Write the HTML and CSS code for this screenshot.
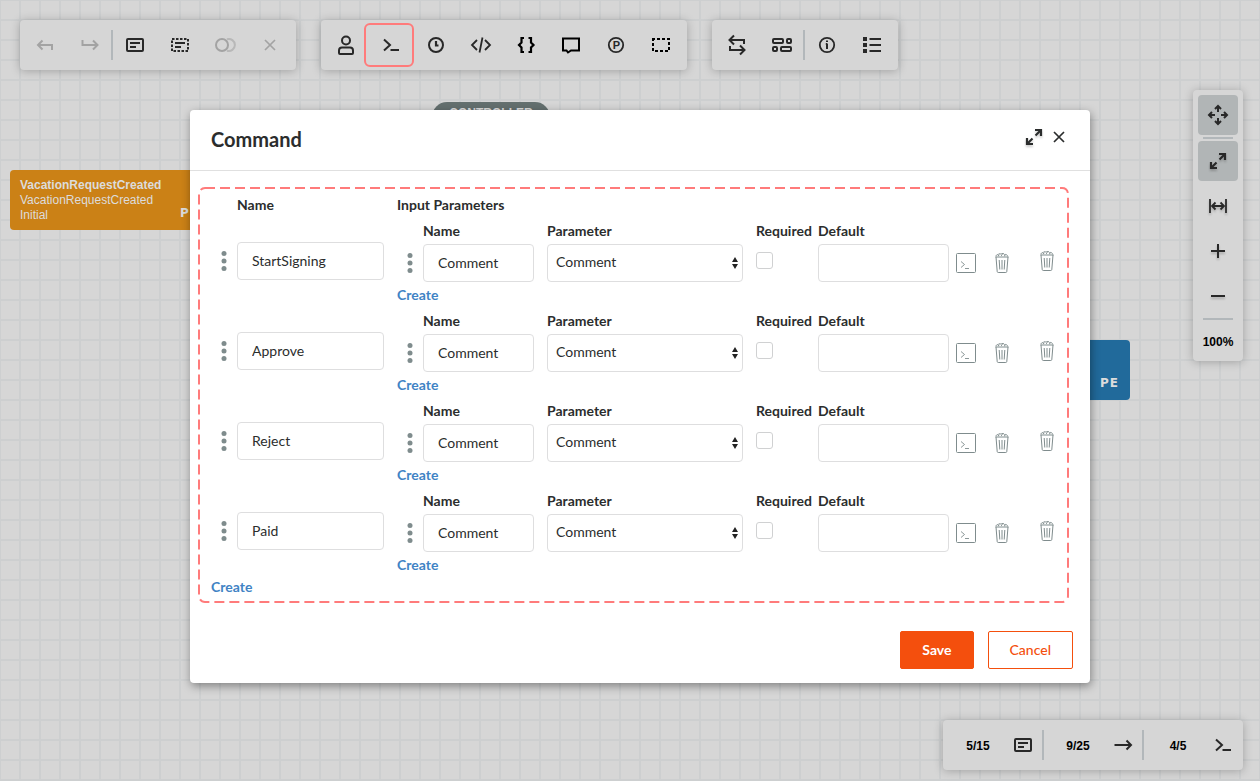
FILE: index.html
```html
<!DOCTYPE html>
<html lang="en">
<head>
    <meta charset="UTF-8">
    <meta name="viewport" content="width=device-width, initial-scale=1.0">
    <title>Command</title>
    <link rel="stylesheet" href="styles.css">
</head>
<body>
    <!-- Icon sprite -->
    <svg class="sprite" xmlns="http://www.w3.org/2000/svg" aria-hidden="true">
        <symbol id="undo" viewBox="0 0 24 24"><path d="M9.500 7.500L5 12l4.500 4.500M5 12h14v5"/></symbol>
        <symbol id="redo" viewBox="0 0 24 24"><path d="M15 7.500l4.500 4.500-4.500 4.500M19.500 12H4.500V7"/></symbol>
        <symbol id="card" viewBox="0 0 24 24"><rect x="4" y="6" width="16" height="12" rx="1"/><path d="M7 10h10M7 14h6"/></symbol>
        <symbol id="card-dashed" viewBox="0 0 24 24"><rect x="4" y="6" width="16" height="12" stroke-dasharray="2.500 1.500"/><path d="M7 10h10M7 14h6"/></symbol>
        <symbol id="toggle" viewBox="0 0 24 24"><circle cx="9" cy="12" r="6"/><path d="M14 6.300a6 6 0 1 1 0 11.400" opacity=".6"/></symbol>
        <symbol id="close" viewBox="0 0 24 24"><path d="M7 7l10 10M17 7L7 17" stroke-width="1.700"/></symbol>
        <symbol id="user" viewBox="0 0 24 24"><circle cx="12" cy="7.500" r="4"/><path d="M5 20v-2.500c0-2 1.200-3 3-3h8c1.800 0 3 1 3 3V20a1 1 0 0 1-1 1H6a1 1 0 0 1-1-1z"/></symbol>
        <symbol id="prompt" viewBox="0 0 24 24"><path d="M5 6.500l6 5.500-6 5.500M11.500 17h8.500"/></symbol>
        <symbol id="clock" viewBox="0 0 24 24"><circle cx="12" cy="12" r="7"/><path d="M12 8v4.500h2.500" stroke-width="2.200"/></symbol>
        <symbol id="code" viewBox="0 0 24 24"><path d="M8 7l-5 5 5 5M16 7l5 5-5 5M13.500 4.500l-3 15" stroke-width="1.800"/></symbol>
        <symbol id="braces" viewBox="0 0 24 24"><path d="M10 5H7.500v4.500L5 12l2.500 2.500V19H10M14.500 5H17v4.500l2.500 2.500-2.500 2.500V19h-2.500" stroke-width="2.200"/></symbol>
        <symbol id="speech" viewBox="0 0 24 24"><path d="M4 5.500h16v12h-8l-3 2-1.500-2H4z"/></symbol>
        <symbol id="parking" viewBox="0 0 24 24"><circle cx="12" cy="12" r="7.200" stroke-width="1.800"/><text x="12.500" y="15.800">P</text></symbol>
        <symbol id="region" viewBox="0 0 24 24"><rect x="4" y="6" width="16" height="12" stroke-dasharray="3 2" stroke-dashoffset="1"/></symbol>
        <symbol id="swap" viewBox="0 0 24 24"><path d="M19 11V7H5M9 2.500L4.500 7 9 11.500M5 13v4h14M15 12.500l4.500 4.500-4.500 4.500"/></symbol>
        <symbol id="layout" viewBox="0 0 24 24"><rect x="3" y="6" width="10" height="4" rx="1"/><rect x="17" y="6" width="4" height="4" rx="1"/><rect x="3" y="14" width="4" height="4" rx="1"/><rect x="11" y="14" width="10" height="4" rx="1"/></symbol>
        <symbol id="info" viewBox="0 0 24 24"><circle cx="12" cy="12" r="7.200" stroke-width="1.800"/><path d="M12 10.500V16M10.800 11H12M12 7.500V9"/></symbol>
        <symbol id="list" viewBox="0 0 24 24"><path d="M3 6h4M3 12h4M3 18h4" stroke-width="4"/><path d="M9.500 6H21M9.500 12H21M9.500 18H21"/></symbol>
        <symbol id="move" viewBox="0 0 24 24"><path d="M12 3.500v5.500M12 15v5.500M3.500 12H9M15 12h5.500M9 6l3-3 3 3M9 18l3 3 3-3M6 9l-3 3 3 3M18 9l3 3-3 3"/></symbol>
        <symbol id="expand" viewBox="0 0 24 24"><path d="M13.500 10.500L18 6M10.500 13.500L6 18" stroke-width="2.200"/><path d="M13 5h6v6M5 13v6h6" stroke-width="2.200"/></symbol>
        <symbol id="fit" viewBox="0 0 24 24"><path d="M4 5v14M20 5v14M6 12h12M9.500 8.500L6 12l3.500 3.500M14.500 8.500L18 12l-3.500 3.500" stroke-width="1.800"/></symbol>
        <symbol id="plus" viewBox="0 0 24 24"><path d="M12 5v14M5 12h14"/></symbol>
        <symbol id="minus" viewBox="0 0 24 24"><path d="M5 12h14"/></symbol>
        <symbol id="arrow" viewBox="0 0 24 24"><path d="M3.500 12H20M15.500 7.500L20 12l-4.500 4.500"/></symbol>
        <symbol id="dots" viewBox="0 0 6 20"><circle cx="3" cy="2.500" r="2.500"/><circle cx="3" cy="10" r="2.500"/><circle cx="3" cy="17.500" r="2.500"/></symbol>
        <symbol id="expression" viewBox="0 0 20 20"><rect x=".5" y=".5" width="19" height="19" rx="1"/><path d="M5 8.500l3.500 3L5 14.500M9 15.500h4" stroke-width=".9"/></symbol>
        <symbol id="trash" viewBox="0 0 14 20"><path d="M.5 4h13M1 4l1.200 14.500c.1.600.4 1 1 1h7.600c.6 0 .9-.4 1-1L13 4"/><path d="M1 3.500c0-1.500 1-2 2-1.800C3.500.5 5 .4 6 1.200 7.200.2 9 .4 9.600 1.500c1.400-.3 2.800.3 3.200 2M3 3l1.500-1.200M6 2.800l1.500-1.300M9 3l1.500-.8"/><path d="M4.200 7l.6 9.500M7 7v9.500M9.800 7l-.6 9.500"/></symbol>
        <symbol id="updown" viewBox="0 0 6 12"><path d="M3 0l3 5H0zM3 12L0 7h6z"/></symbol>
    </svg>

    <!-- Workflow canvas -->
    <main class="canvas">
        <div class="node node-control">CONTROLLER</div>
        <div class="node node-activity">
            <strong>VacationRequestCreated</strong>
            <span>VacationRequestCreated</span>
            <span>Initial</span>
            <b class="node-flags">PE</b>
        </div>
        <div class="node node-final"><b class="node-flags">PE</b></div>
    </main>

    <header class="toolbars">
        <div class="toolbar">
            <button type="button" aria-label="Undo" disabled><svg class="icon"><use href="#undo"/></svg></button>
            <button type="button" aria-label="Redo" disabled><svg class="icon"><use href="#redo"/></svg></button>
            <span class="separator"></span>
            <button type="button" aria-label="Create activity"><svg class="icon"><use href="#card"/></svg></button>
            <button type="button" aria-label="Select all"><svg class="icon"><use href="#card-dashed"/></svg></button>
            <button type="button" aria-label="Copy" disabled><svg class="icon"><use href="#toggle"/></svg></button>
            <button type="button" aria-label="Delete" disabled><svg class="icon"><use href="#close"/></svg></button>
        </div>
        <div class="toolbar">
            <button type="button" aria-label="Actors"><svg class="icon"><use href="#user"/></svg></button>
            <button type="button" aria-label="Commands" class="highlighted"><svg class="icon"><use href="#prompt"/></svg></button>
            <button type="button" aria-label="Timers"><svg class="icon"><use href="#clock"/></svg></button>
            <button type="button" aria-label="Code actions"><svg class="icon"><use href="#code"/></svg></button>
            <button type="button" aria-label="Parameters" class="dark"><svg class="icon"><use href="#braces"/></svg></button>
            <button type="button" aria-label="Localization" class="dark"><svg class="icon"><use href="#speech"/></svg></button>
            <button type="button" aria-label="Process"><svg class="icon"><use href="#parking"/></svg></button>
            <button type="button" aria-label="Area" class="dark"><svg class="icon"><use href="#region"/></svg></button>
        </div>
        <div class="toolbar">
            <button type="button" aria-label="Swap"><svg class="icon"><use href="#swap"/></svg></button>
            <button type="button" aria-label="Arrange"><svg class="icon"><use href="#layout"/></svg></button>
            <span class="separator"></span>
            <button type="button" aria-label="Info"><svg class="icon"><use href="#info"/></svg></button>
            <button type="button" aria-label="Legend"><svg class="icon"><use href="#list"/></svg></button>
        </div>
    </header>

    <aside class="zoombar">
        <button type="button" aria-label="Move" class="pressed"><svg class="icon"><use href="#move"/></svg></button>
        <span class="separator"></span>
        <div class="zoombar-group">
            <button type="button" aria-label="Full screen" class="pressed"><svg class="icon shaded"><use href="#expand"/></svg></button>
            <button type="button" aria-label="Fit width"><svg class="icon shaded"><use href="#fit"/></svg></button>
            <button type="button" aria-label="Zoom in"><svg class="icon shaded"><use href="#plus"/></svg></button>
            <button type="button" aria-label="Zoom out"><svg class="icon shaded"><use href="#minus"/></svg></button>
        </div>
        <span class="separator"></span>
        <span class="zoom-value">100%</span>
    </aside>

    <footer class="stats">
        <div class="stat"><span>5/15</span><svg class="icon"><use href="#card"/></svg></div>
        <span class="separator"></span>
        <div class="stat"><span>9/25</span><svg class="icon"><use href="#arrow"/></svg></div>
        <span class="separator"></span>
        <div class="stat"><span>4/5</span><svg class="icon"><use href="#prompt"/></svg></div>
    </footer>

    <div class="modal-overlay">
        <form class="modal" role="dialog" aria-labelledby="modal-title">
            <div class="modal-header">
                <h1 class="modal-title" id="modal-title">Command</h1>
                <div class="modal-tools">
                    <button type="button" aria-label="Expand"><svg class="icon shaded"><use href="#expand"/></svg></button>
                    <button type="button" aria-label="Close"><svg class="icon"><use href="#close"/></svg></button>
                </div>
            </div>

            <div class="modal-body">
                <div class="commands">
                    <svg class="commands-outline" aria-hidden="true"><rect width="100%" height="100%" rx="6"/></svg>
                    <div class="commands-head">
                        <span class="head-name">Name</span>
                        <span class="head-params">Input Parameters</span>
                    </div>

                    <div class="command">
                        <svg class="handle"><use href="#dots"/></svg>
                        <input class="field command-name" type="text" aria-label="Command name" value="StartSigning">
                        <div class="params">
                            <div class="param">
                                <svg class="handle"><use href="#dots"/></svg>
                                <div class="cell cell-name">
                                    <label for="name-1">Name</label>
                                    <input class="field" id="name-1" type="text" value="Comment">
                                </div>
                                <div class="cell cell-parameter">
                                    <label for="parameter-1">Parameter</label>
                                    <div class="select-wrap">
                                        <select class="field" id="parameter-1"><option>Comment</option></select>
                                        <svg class="updown"><use href="#updown"/></svg>
                                    </div>
                                </div>
                                <div class="cell cell-required">
                                    <label for="required-1">Required</label>
                                    <input class="check" id="required-1" type="checkbox">
                                </div>
                                <div class="cell cell-default">
                                    <label for="default-1">Default</label>
                                    <input class="field" id="default-1" type="text">
                                </div>
                                <button class="row-button" type="button" aria-label="Edit expression"><svg class="expression"><use href="#expression"/></svg></button>
                                <button class="row-button" type="button" aria-label="Delete parameter"><svg class="trash"><use href="#trash"/></svg></button>
                            </div>
                            <a class="create" href="#">Create</a>
                        </div>
                        <button class="row-button command-delete" type="button" aria-label="Delete command"><svg class="trash"><use href="#trash"/></svg></button>
                    </div>

                    <div class="command">
                        <svg class="handle"><use href="#dots"/></svg>
                        <input class="field command-name" type="text" aria-label="Command name" value="Approve">
                        <div class="params">
                            <div class="param">
                                <svg class="handle"><use href="#dots"/></svg>
                                <div class="cell cell-name">
                                    <label for="name-2">Name</label>
                                    <input class="field" id="name-2" type="text" value="Comment">
                                </div>
                                <div class="cell cell-parameter">
                                    <label for="parameter-2">Parameter</label>
                                    <div class="select-wrap">
                                        <select class="field" id="parameter-2"><option>Comment</option></select>
                                        <svg class="updown"><use href="#updown"/></svg>
                                    </div>
                                </div>
                                <div class="cell cell-required">
                                    <label for="required-2">Required</label>
                                    <input class="check" id="required-2" type="checkbox">
                                </div>
                                <div class="cell cell-default">
                                    <label for="default-2">Default</label>
                                    <input class="field" id="default-2" type="text">
                                </div>
                                <button class="row-button" type="button" aria-label="Edit expression"><svg class="expression"><use href="#expression"/></svg></button>
                                <button class="row-button" type="button" aria-label="Delete parameter"><svg class="trash"><use href="#trash"/></svg></button>
                            </div>
                            <a class="create" href="#">Create</a>
                        </div>
                        <button class="row-button command-delete" type="button" aria-label="Delete command"><svg class="trash"><use href="#trash"/></svg></button>
                    </div>

                    <div class="command">
                        <svg class="handle"><use href="#dots"/></svg>
                        <input class="field command-name" type="text" aria-label="Command name" value="Reject">
                        <div class="params">
                            <div class="param">
                                <svg class="handle"><use href="#dots"/></svg>
                                <div class="cell cell-name">
                                    <label for="name-3">Name</label>
                                    <input class="field" id="name-3" type="text" value="Comment">
                                </div>
                                <div class="cell cell-parameter">
                                    <label for="parameter-3">Parameter</label>
                                    <div class="select-wrap">
                                        <select class="field" id="parameter-3"><option>Comment</option></select>
                                        <svg class="updown"><use href="#updown"/></svg>
                                    </div>
                                </div>
                                <div class="cell cell-required">
                                    <label for="required-3">Required</label>
                                    <input class="check" id="required-3" type="checkbox">
                                </div>
                                <div class="cell cell-default">
                                    <label for="default-3">Default</label>
                                    <input class="field" id="default-3" type="text">
                                </div>
                                <button class="row-button" type="button" aria-label="Edit expression"><svg class="expression"><use href="#expression"/></svg></button>
                                <button class="row-button" type="button" aria-label="Delete parameter"><svg class="trash"><use href="#trash"/></svg></button>
                            </div>
                            <a class="create" href="#">Create</a>
                        </div>
                        <button class="row-button command-delete" type="button" aria-label="Delete command"><svg class="trash"><use href="#trash"/></svg></button>
                    </div>

                    <div class="command">
                        <svg class="handle"><use href="#dots"/></svg>
                        <input class="field command-name" type="text" aria-label="Command name" value="Paid">
                        <div class="params">
                            <div class="param">
                                <svg class="handle"><use href="#dots"/></svg>
                                <div class="cell cell-name">
                                    <label for="name-4">Name</label>
                                    <input class="field" id="name-4" type="text" value="Comment">
                                </div>
                                <div class="cell cell-parameter">
                                    <label for="parameter-4">Parameter</label>
                                    <div class="select-wrap">
                                        <select class="field" id="parameter-4"><option>Comment</option></select>
                                        <svg class="updown"><use href="#updown"/></svg>
                                    </div>
                                </div>
                                <div class="cell cell-required">
                                    <label for="required-4">Required</label>
                                    <input class="check" id="required-4" type="checkbox">
                                </div>
                                <div class="cell cell-default">
                                    <label for="default-4">Default</label>
                                    <input class="field" id="default-4" type="text">
                                </div>
                                <button class="row-button" type="button" aria-label="Edit expression"><svg class="expression"><use href="#expression"/></svg></button>
                                <button class="row-button" type="button" aria-label="Delete parameter"><svg class="trash"><use href="#trash"/></svg></button>
                            </div>
                            <a class="create" href="#">Create</a>
                        </div>
                        <button class="row-button command-delete" type="button" aria-label="Delete command"><svg class="trash"><use href="#trash"/></svg></button>
                    </div>

                    <a class="create" href="#">Create</a>
                </div>
            </div>

            <div class="modal-footer">
                <button type="submit" class="button button-primary">Save</button>
                <button type="button" class="button">Cancel</button>
            </div>
        </form>
    </div>
</body>
</html>
```

FILE: styles.css
```css
:root {
    --canvas-color: #d6d6d6;
    --grid-color: #cdcfd0;
    --panel-color: #d6d6d6;
    --separator-color: #b2b7ba;
    --pressed-color: #b1b5b6;
    --icon-color: #282828;
    --text-primary: #2b2d2d;
    --accent: #f44f0d;
    --link: #4183c4;
    --muted: #7f8c8d;
    --border: #dededf;
    --highlight: #ff7b7b;

    --font-main: Lato, "Liberation Sans", sans-serif;
    --font-canvas: "Liberation Sans", Arial, sans-serif;
    --shadow-panel: 0 1px 10px rgba(0, 0, 0, 0.25);
}

*, *::before, *::after {
    box-sizing: border-box;
    margin: 0;
    padding: 0;
}

body {
    min-height: 100vh;
    overflow: hidden;
    font-family: var(--font-main);
    font-size: 14px;
    color: var(--text-primary);
    background-color: var(--canvas-color);
    background-image:
        linear-gradient(var(--grid-color) 2px, transparent 2px),
        linear-gradient(90deg, var(--grid-color) 2px, transparent 2px);
    background-size: 20px 20px;
    background-position: -1px -1px;
}

button {
    border: none;
    background: none;
    font: inherit;
    color: inherit;
    cursor: pointer;
}

.sprite {
    display: none;
}

.icon {
    display: block;
    width: 24px;
    height: 24px;
    fill: none;
    stroke: currentColor;
    stroke-width: 2;
}

#parking text {
    fill: currentColor;
    stroke: none;
    text-anchor: middle;
    font: bold 11px var(--font-canvas);
}

.shaded {
    filter: drop-shadow(0 2px 1px rgba(0, 0, 0, 0.2));
}

/* Canvas nodes */
.node {
    position: absolute;
    width: 200px;
    height: 60px;
    padding: 8px 10px;
    border-radius: 4px;
    font: 12px/15px var(--font-canvas);
    color: #dcdcdc;
}

.node strong,
.node span {
    display: block;
}

.node-control {
    left: 432px;
    top: 102px;
    width: 118px;
    height: 30px;
    padding: 4px 0;
    border-radius: 15px;
    font-weight: 700;
    text-align: center;
    background: #64706f;
}

.node-activity {
    left: 10px;
    top: 170px;
    background: #cb8116;
}

.node-final {
    left: 930px;
    top: 340px;
    background: #216a9b;
}

.node-flags {
    position: absolute;
    right: 11px;
    bottom: 9px;
    font: bold 12px/15px "DejaVu Sans", sans-serif;
    letter-spacing: 1px;
}

/* Toolbars */
.toolbars {
    position: absolute;
    top: 20px;
    left: 20px;
    display: flex;
    gap: 25px;
}

.toolbar,
.stats,
.zoombar {
    display: flex;
    align-items: center;
    border-radius: 4px;
    color: var(--icon-color);
    background: var(--panel-color);
    box-shadow: var(--shadow-panel);
}

.toolbar {
    height: 50px;
    padding: 0 4px 0 2px;
}

.toolbar button {
    position: relative;
    display: flex;
    align-items: center;
    justify-content: center;
    width: 45px;
    height: 50px;
}

.toolbar button:disabled {
    color: #a3a3a3;
}

.toolbar .dark {
    color: #000;
}

.highlighted::after {
    content: "";
    position: absolute;
    inset: 3px -1px 3px -4px;
    border: 2px solid var(--highlight);
    border-radius: 6px;
}

.separator {
    width: 2px;
    height: 30px;
    margin: 0 -1px;
    background: var(--separator-color);
}

.zoombar {
    position: absolute;
    top: 90px;
    right: 17px;
    flex-direction: column;
    gap: 2px;
    padding: 5px;
}

.zoombar .separator {
    width: 30px;
    height: 2px;
    margin: 0;
}

.zoombar-group {
    display: flex;
    flex-direction: column;
    gap: 5px;
}

.zoombar button {
    display: flex;
    align-items: center;
    justify-content: center;
    width: 40px;
    height: 40px;
    border-radius: 4px;
}

.zoombar .pressed {
    background: var(--pressed-color);
}

.zoom-value {
    padding-top: 6px;
    font: bold 12px/28px var(--font-canvas);
    color: #000;
}

.stats {
    position: absolute;
    right: 17px;
    bottom: 11px;
    height: 50px;
}

.stat {
    display: flex;
    align-items: center;
    width: 100px;
    padding: 0 8px 0 12px;
}

.stat span {
    flex: 1;
    padding: 1px 10px 0 0;
    font: bold 12px/16px var(--font-canvas);
    text-align: center;
    color: #000;
}

/* Modal */
.modal-overlay {
    position: absolute;
    inset: 0;
    display: flex;
    justify-content: center;
    align-items: flex-start;
    padding: 110px 0 0 20px;
    pointer-events: none;
}

.modal {
    width: 100%;
    max-width: 900px;
    border-radius: 4px;
    background: #fff;
    box-shadow: 1px 3px 10px rgba(0, 0, 0, 0.4);
    pointer-events: auto;
}

.modal-header {
    display: flex;
    align-items: center;
    justify-content: space-between;
    padding: 14px 19px 16px 21px;
    border-bottom: 1px solid #e0e0e0;
}

.modal-title {
    font-size: 20px;
    font-weight: 700;
    line-height: 30px;
}

.modal-tools {
    display: flex;
    gap: 1px;
    padding-bottom: 4px;
}

.modal-body {
    padding: 16px 21px 0 8px;
}

.commands {
    position: relative;
    padding: 7px 13px 6px;
}

.commands-outline {
    position: absolute;
    top: 1px;
    left: 1px;
    width: calc(100% - 2px);
    height: calc(100% - 2px);
    overflow: visible;
    fill: none;
    stroke: var(--highlight);
    stroke-width: 2;
    stroke-dasharray: 10 5;
    pointer-events: none;
}

.commands-head {
    display: flex;
    padding: 0 0 1px 26px;
    font-weight: 700;
    line-height: 21px;
}

.head-name {
    width: 160px;
}

.command {
    display: flex;
    height: 90px;
}

.handle {
    flex: none;
    width: 6px;
    height: 20px;
    margin: 35px 10px 0;
    fill: var(--muted);
}

.field {
    display: block;
    width: 100%;
    height: 38px;
    padding: 0 14px 2px;
    border: 1px solid var(--border);
    border-radius: 4px;
    background: #fff;
    font: 14px/20px var(--font-main);
    color: var(--text-primary);
}

.command-name {
    flex: none;
    width: 147px;
    margin: 26px 13px 0 0;
}

.params {
    flex: 1;
    padding-top: 5px;
}

.param {
    display: flex;
}

.param .handle {
    margin-top: 32px;
}

.cell {
    flex: none;
}

.cell label {
    display: block;
    margin-bottom: 3px;
    font-weight: 700;
    line-height: 20px;
}

.cell-name {
    width: 111px;
}

.cell-parameter {
    flex: 1;
    margin: 0 13px;
}

.cell-required {
    width: 62px;
}

.cell-default {
    width: 131px;
    margin-right: 7px;
}

.select-wrap {
    position: relative;
}

select.field {
    padding: 0 8px 2px;
    appearance: none;
}

.updown {
    position: absolute;
    top: 13px;
    right: 5px;
    width: 6px;
    height: 12px;
    fill: #222;
}

.check {
    display: block;
    width: 17px;
    height: 17px;
    margin-top: 11px;
    border: 1px solid #d0d1d2;
    border-radius: 3px;
    background: #fff;
    appearance: none;
}

.check:checked {
    background: var(--muted);
}

.row-button {
    flex: none;
    display: flex;
    align-items: center;
    justify-content: center;
    width: 20px;
    height: 38px;
    margin-top: 23px;
    color: var(--muted);
}

.row-button + .row-button {
    margin-left: 16px;
}

.command-delete {
    width: 18px;
    margin: 26px 0 0 26px;
}

.expression,
.trash {
    display: block;
    width: 20px;
    height: 20px;
    fill: none;
    stroke: currentColor;
}

.trash {
    width: 14px;
}

.create {
    display: block;
    width: fit-content;
    font-weight: 700;
    line-height: 21px;
    color: var(--link);
    text-decoration: none;
}

.param + .create {
    margin-top: 2px;
}

.modal-footer {
    display: flex;
    justify-content: flex-end;
    gap: 14px;
    padding: 28px 17px 14px;
}

.button {
    height: 38px;
    padding: 0 21px 2px;
    border: 1px solid var(--accent);
    border-radius: 2px;
    font-weight: 500;
    color: var(--accent);
}

.button-primary {
    font-weight: 700;
    color: #fff;
    background: var(--accent);
}
```
